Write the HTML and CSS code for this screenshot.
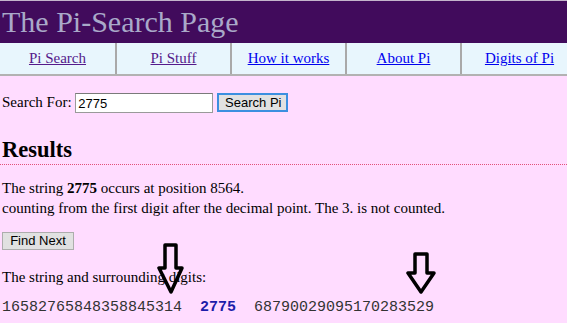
FILE: index.html
```html
<!DOCTYPE html>
<html lang="en">
<head>
    <meta charset="UTF-8">
    <title>The Pi-Search Page</title>
    <link rel="stylesheet" href="styles.css">
</head>
<body>
    <div class="header">The Pi-Search Page</div>

    <div class="nav">
        <div class="nav-cell first"><a class="visited" href="#">Pi Search</a></div>
        <div class="nav-cell"><a class="visited" href="#">Pi Stuff</a></div>
        <div class="nav-cell"><a href="#">How it works</a></div>
        <div class="nav-cell"><a href="#">About Pi</a></div>
        <div class="nav-cell last"><a href="#">Digits of Pi</a></div>
    </div>

    <div class="content">
        <form class="search-row">
            Search For: <input class="search-input" type="text" value="2775"> <button class="btn btn-default" type="button">Search Pi</button>
        </form>

        <h2 class="results-title">Results</h2>

        <p class="result-text">
            The string <b>2775</b> occurs at position 8564.<br>
            counting from the first digit after the decimal point. The 3. is not counted.
        </p>

        <button class="btn btn-next" type="button">Find Next</button>

        <p class="surround-label">The string and surrounding digits:</p>

        <div class="digits">16582765848358845314&nbsp;&nbsp;<b class="hit">2775</b>&nbsp;&nbsp;68790029095170283529</div>
    </div>

    <!-- hand-drawn arrows laid over the text -->
    <svg class="arrows" width="567" height="323" viewBox="0 0 567 323">
        <polygon points="165,245 176,245 176,268 182,268 171,292 159,268 165,268" />
        <polygon points="415,254 427,254 427,273 434,273 421,292 408,273 415,273" />
    </svg>
</body>
</html>
```

FILE: styles.css
```css
html, body {
    margin: 0;
    padding: 0;
}

body {
    position: relative;
    width: 567px;
    height: 323px;
    overflow: hidden;
    background: #ffdcff;
    font-family: "Liberation Serif", "Times New Roman", serif;
    font-size: 15px;
    color: #000;
}

.header {
    background: #410b5c;
    border-top: 1px solid #c4b4cc;
    height: 42px;
    line-height: 42px;
    padding-left: 2px;
    font-size: 30px;
    color: #a9a9c9;
    white-space: nowrap;
}

.nav {
    display: flex;
    width: 580px;
    height: 33px;
    box-sizing: border-box;
    background: #e8f6fd;
    border-bottom: 2px solid #b2b2b2;
}

.nav-cell {
    flex: 0 0 115px;
    box-sizing: border-box;
    border-right: 2px solid #a9a9a9;
    text-align: center;
    line-height: 31px;
    white-space: nowrap;
}

.nav-cell.first {
    flex-basis: 117px;
}

.nav-cell.last {
    border-right: none;
}

.nav-cell a {
    color: #0000ee;
}

.nav-cell a.visited {
    color: #551a8b;
}

.content {
    padding: 0 2px;
}

.search-row {
    margin: 17px 0 0;
    height: 19px;
    line-height: 19px;
    white-space: nowrap;
}

.search-input {
    box-sizing: border-box;
    width: 138px;
    height: 20px;
    margin: 0;
    padding: 0 2px;
    vertical-align: top;
    border: 1px solid #9a9a9a;
    border-top-color: #7a7a7a;
    background: #fff;
    font-family: "Liberation Sans", Arial, sans-serif;
    font-size: 13px;
    color: #000;
}

.btn {
    box-sizing: border-box;
    margin: 0;
    padding: 0 6px;
    height: 19px;
    background: #e1e1e1;
    border: 1px solid #adadad;
    font-family: "Liberation Sans", Arial, sans-serif;
    font-size: 13px;
    color: #000;
    line-height: 17px;
}

.btn-default {
    width: 71px;
    vertical-align: top;
    border: 2px solid #3c8fe0;
    line-height: 15px;
}

.results-title {
    margin: 24px -2px 0;
    padding: 0 2px;
    font-size: 22.5px;
    line-height: 28px;
    font-weight: bold;
    border-bottom: 1px dotted #e2507a;
}

.result-text {
    margin: 13px 0 0;
    line-height: 20px;
}

.btn-next {
    display: block;
    width: 72px;
    margin-top: 14px;
    height: 18px;
    line-height: 16px;
}

.surround-label {
    margin: 17px 0 0;
    line-height: 20px;
}

.digits {
    margin-top: 11px;
    font-family: "Liberation Mono", "Courier New", monospace;
    font-size: 15px;
    line-height: 20px;
    color: #333;
    white-space: nowrap;
}

.hit {
    color: #1c1caa;
}

.arrows {
    position: absolute;
    top: 0;
    left: 0;
    pointer-events: none;
}

.arrows polygon {
    fill: none;
    stroke: #000;
    stroke-width: 3.5;
    stroke-linejoin: round;
}
```
